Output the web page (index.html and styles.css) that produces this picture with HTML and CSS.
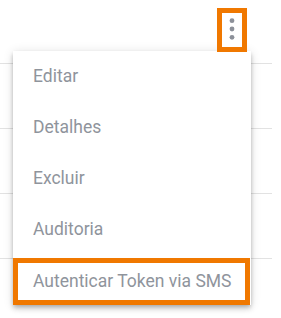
FILE: index.html
```html
<!DOCTYPE html>
<html lang="pt-BR">
<head>
    <meta charset="UTF-8">
    <meta name="viewport" content="width=device-width, initial-scale=1.0">
    <title>Ações</title>
    <link rel="stylesheet" href="styles.css">
</head>
<body>

    <div class="grid">
        <div class="row first">
            <button class="kebab highlight" aria-label="Mais ações">
                <svg width="20" height="34" viewBox="0 0 20 34">
                    <circle cx="10" cy="7.7" r="2.4" fill="#8c9099"/>
                    <circle cx="10" cy="16" r="2.4" fill="#8c9099"/>
                    <circle cx="10" cy="24.3" r="2.4" fill="#8c9099"/>
                </svg>
            </button>
        </div>
        <div class="row"></div>
        <div class="row"></div>
        <div class="row"></div>
    </div>

    <ul class="menu">
        <li class="menu-item">Editar</li>
        <li class="menu-item">Detalhes</li>
        <li class="menu-item">Excluir</li>
        <li class="menu-item">Auditoria</li>
        <li class="menu-item highlight">Autenticar Token via SMS</li>
    </ul>

</body>
</html>
```

FILE: styles.css
```css
body {
    font-family: Roboto, "Liberation Sans", sans-serif;
    background-color: #fff;
    margin: 0;
    padding: 0;
}
.grid {
    width: 272px;
}
.row {
    height: 64px;
    border-bottom: 1px solid #e2e2e2;
    position: relative;
}
.row.first {
    height: 63px;
}
.kebab {
    position: absolute;
    left: 217px;
    top: 8px;
    width: 30px;
    height: 44px;
    padding: 0;
    background: #fff;
    display: flex;
    align-items: center;
    justify-content: center;
    z-index: 2;
}
.kebab svg {
    display: block;
}
.highlight {
    border: 5px solid #f07800;
    box-sizing: border-box;
}
.menu {
    position: absolute;
    left: 13px;
    top: 51px;
    width: 238px;
    margin: 0;
    padding: 0;
    list-style: none;
    background-color: #fff;
    box-shadow: 0 2px 4px -1px rgba(0,0,0,0.2), 0 4px 5px 0 rgba(0,0,0,0.14), 0 1px 10px 0 rgba(0,0,0,0.12);
    z-index: 1;
}
.menu-item {
    height: 51px;
    line-height: 51px;
    padding-left: 20px;
    font-size: 17.5px;
    color: #8f949c;
    box-sizing: border-box;
}
.menu-item.highlight {
    margin-top: 3px;
    height: 47px;
    line-height: 37px;
    padding-left: 15px;
    width: 237px;
}
```
